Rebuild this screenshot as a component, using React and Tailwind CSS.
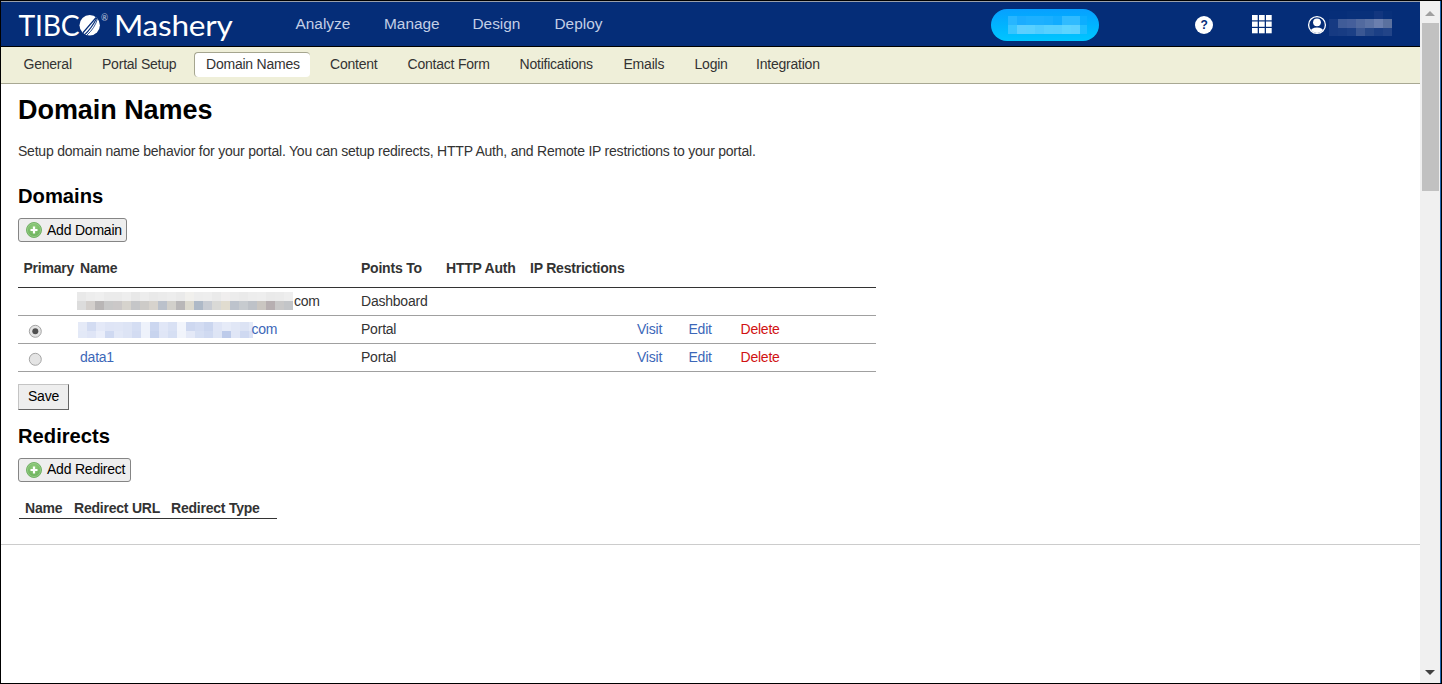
import React from "react";

const mainNav = [
  ["Analyze", "w-[88.5px]"],
  ["Manage", "w-[88.5px]"],
  ["Design", "w-[82px]"],
  ["Deploy", "w-[60px]"],
];

const subNav = [
  ["Portal Setup", "w-[92px]"],
  ["Domain Names", "w-[116px]"],
  ["Content", "w-[77.5px]"],
  ["Contact Form", "w-[112px]"],
  ["Notifications", "w-[104px]"],
  ["Emails", "w-[71px]"],
  ["Login", "w-[61.5px]"],
  ["Integration", "w-[80px]"],
];

function Logo() {
  return (
    <svg className="block shrink-0" width="218" height="40" viewBox="0 0 218 40" fill="#fff" fontFamily="Lato, sans-serif">
      <text x="0.5" y="30.5" fontSize="29" textLength="61" lengthAdjust="spacingAndGlyphs">TIBC</text>
      <clipPath id="globe"><circle cx="71.7" cy="20.2" r="10.2" /></clipPath>
      <circle cx="71.7" cy="20.2" r="10.2" />
      <g clipPath="url(#globe)" fill="none" stroke="#052d78">
        <path d="M63 30 Q70 22 79 11.5" strokeWidth="1.2" />
        <path d="M65.5 31 Q74 23 79 12.5" strokeWidth="1.1" />
        <path d="M69 30 Q77 23 79.5 13.5" strokeWidth=".8" />
        <path d="M59 23 Q62 28 67 31 L60 34Z" fill="#052d78" stroke="none" />
      </g>
      <text x="83" y="16" fontSize="8.5" fillOpacity=".75">®</text>
      <text x="96" y="30.5" fontSize="28" textLength="118.5" lengthAdjust="spacingAndGlyphs">Mashery</text>
    </svg>
  );
}

function Mosaic({ width, height, cell, rows, className }) {
  return (
    <svg className={className} width={width} height={height} shapeRendering="crispEdges">
      {rows.map((r, j) =>
        r.colors.map((c, i) => (
          <rect key={j + "-" + i} x={i * cell} y={r.y} width={cell} height={r.h} fill={c} />
        ))
      )}
    </svg>
  );
}

const grayRows = [
  { y: 0, h: 9, colors: "#e9e9e9 #ededed #efefef #ebebeb #ebebeb #eeeeee #e8e8e8 #ededed #e9e9e9 #ebebeb #ededed #eaeaea #f1f0ed #ededed #eeeeee #eaeaea #f0eeee #ececec #eaeaea #ededed #eeeeee #eaeaea #ebebeb #eeeeee".split(" ") },
  { y: 9, h: 9, colors: "#dcdcdc #d3cfcc #b9b6b6 #c8c8c8 #cbc8c8 #d6d3cd #c5c6c8 #cdcbc8 #d7d3cd #bbc1cb #d2d0cb #b9b7b8 #dcd9ce #aeb9c7 #c8ccd3 #d9d9d6 #e1dccf #bdc3cc #c7cbcf #bec2c8 #cac6c1 #b7afb1 #c9c8c8 #c3c5c8".split(" ") },
];
const blueRows = [
  { y: 0, h: 9, colors: "#e5eaf7 #d3dcf2 #e4e9f8 #dfe5f6 #e0e6f6 #dde4f5 #d5def3 #eef2fb #ccd7f0 #e1e7f7 #d9e1f4 #f2f5fc #ced8f0 #d3dcf2 #cbd6ef #dfe5f6 #e6ebf8 #e1e7f6 #dce3f4 #e4eaf8".split(" ") },
  { y: 9, h: 7, colors: "#e3e9f7 #dfe5f6 #eaeefa #cfd9f1 #e2e8f7 #dde4f5 #d3dcf2 #eef2fb #c8d4ee #e0e6f6 #d6dff3 #f1f4fb #e4e9f7 #d6dff3 #d0daf1 #dee5f5 #bdcbea #e0e6f6 #cfd9f1 #dbe2f5".split(" ") },
];
const pillRows = [
  { y: 0, h: 9, colors: "#28b6ff #1badff #1db0ff #1db0ff #1aafff #12acff #30bbff #30bbff #0caeff".split(" ") },
  { y: 9, h: 9, colors: "#38c5ff #5ccfff #59d0ff #50ccff #56d0ff #56cfff #5cd4ff #5cd1ff #1fbeff".split(" ") },
];
const userRows = [
  { y: 0, h: 8, colors: "#062e79 #062e79 #08307a #08307a #08307a #12367f #08307a".split(" ") },
  { y: 8, h: 9, colors: "#163a82 #405c98 #455f9b #526a9f #5c73a5 #6b7fae #5b719f".split(" ") },
  { y: 17, h: 8, colors: "#163a82 #183c83 #1c4086 #3a5793 #264889 #1b3f85 #224488".split(" ") },
];

function PlusIcon() {
  return (
    <svg className="shrink-0" width="16" height="16" viewBox="0 0 16 16">
      <defs>
        <radialGradient id="green" cx=".5" cy=".35" r=".7">
          <stop offset="0" stopColor="#94cf80" />
          <stop offset="1" stopColor="#62ab53" />
        </radialGradient>
      </defs>
      <circle cx="8" cy="8" r="7.5" fill="url(#green)" stroke="#74b268" />
      <circle cx="8" cy="8" r="6.5" fill="none" stroke="#9ed18f" strokeWidth=".8" />
      <path d="M8 4.5v7M4.5 8h7" stroke="#fff" strokeWidth="2.2" />
    </svg>
  );
}

function AddButton({ children, className, labelClass }) {
  return (
    <button className={"flex h-6 items-center gap-[5px] whitespace-nowrap rounded-[3px] border border-[#858585] bg-[#eee] pl-[7px] text-black " + className}>
      <PlusIcon />
      <span className={labelClass}>{children}</span>
    </button>
  );
}

function Radio({ checked }) {
  return (
    <svg className="ml-[10px] mt-[5px]" width="14" height="14" viewBox="0 0 14 14">
      <circle cx="7.3" cy="7.3" r="6" fill="#e4e4e4" stroke="#a5a5a5" />
      {checked && <circle cx="7.3" cy="7.3" r="3" fill="#505050" />}
    </svg>
  );
}

const columns = "grid grid-cols-[62px_281px_85px_84px_107px_51.5px_52px_1fr] items-center";

function DomainRow({ radio, name, target, links }) {
  return (
    <div className={columns + " h-7 border-b border-[#a0a0a0] pb-[2px]"}>
      <div>{radio}</div>
      <div className="flex items-center">{name}</div>
      <div>{target}</div>
      <div />
      <div />
      {links && (
        <>
          <a className="text-[#3c67b8]">Visit</a>
          <a className="text-[#3c67b8]">Edit</a>
          <a className="text-[#d11212]">Delete</a>
        </>
      )}
    </div>
  );
}

function Header() {
  return (
    <header className="flex h-[45px] shrink-0 items-center border-b border-black bg-[#052d78]">
      <div className="w-[276.5px] shrink-0 pl-[17px] pt-[2px]"><Logo /></div>
      <nav className="ml-[18px] flex w-[695.5px] text-[15.4px] tracking-normal text-[#c3cfe6]">
        {mainNav.map(([label, w]) => (
          <a key={label} className={w + " shrink-0"}>{label}</a>
        ))}
      </nav>
      <div className="mt-[2px] flex h-8 w-[108px] shrink-0 items-center rounded-full bg-linear-to-b from-[#08a0ff] to-[#00c6ff] pl-[17px]">
        <Mosaic width={79} height={18} cell={9} rows={pillRows} className="mt-[-1px]" />
      </div>
      <svg className="ml-[96px] mt-[2px] shrink-0" width="18" height="18" viewBox="0 0 18 18">
        <circle cx="9" cy="9" r="9" fill="#fff" />
        <text x="9" y="13" textAnchor="middle" fontFamily="Liberation Sans, sans-serif" fontWeight="700" fontSize="12" fill="#052d78">?</text>
      </svg>
      <svg className="ml-[39px] mt-px shrink-0" width="20" height="19" viewBox="0 0 20 19" fill="#fff">
        {[0, 6.5, 13].map((y) => [0, 7, 14].map((x) => (
          <rect key={x + "-" + y} x={x} y={y} width="5.7" height="5.3" />
        )))}
      </svg>
      <svg className="ml-[35px] mt-[2px] shrink-0" width="20" height="20" viewBox="0 0 20 20">
        <clipPath id="avatar"><circle cx="10" cy="10" r="7.9" /></clipPath>
        <circle cx="10" cy="10" r="8.4" fill="none" stroke="#fff" strokeWidth="1.3" />
        <g clipPath="url(#avatar)" fill="#fff">
          <circle cx="10" cy="7.3" r="3.9" />
          <ellipse cx="10" cy="17" rx="6.8" ry="4.5" />
        </g>
      </svg>
      <Mosaic width={63} height={25} cell={9} rows={userRows} className="ml-[2px] mt-[-2px] shrink-0" />
    </header>
  );
}

function SubNav() {
  return (
    <nav className="flex h-[37px] shrink-0 border-b border-[#a8a893] bg-[#efefd9] pl-[22.5px] pt-[5px] leading-[25px] text-[#333]">
      <a className="w-[78.5px] shrink-0">General</a>
      {subNav.map(([label, w]) =>
        label === "Domain Names" ? (
          <a key={label} className="mr-5 h-[25px] w-[116px] shrink-0 rounded-[4px] border-l border-t border-[#a5a58f] bg-white pl-[11px] leading-[23px]">{label}</a>
        ) : (
          <a key={label} className={w + " shrink-0"}>{label}</a>
        )
      )}
    </nav>
  );
}

function Scrollbar() {
  return (
    <div className="flex w-[20px] shrink-0 flex-col items-center bg-[#f0f0f0]">
      <svg className="mt-[10px] shrink-0" width="10" height="5"><path d="M0 5L5 0L10 5Z" fill="#a0a0a0" /></svg>
      <div className="mt-[7px] h-[168px] w-[17px] shrink-0 bg-[#c1c1c1]" />
      <svg className="mb-[8px] mt-auto shrink-0" width="10" height="5"><path d="M0 0L5 5L10 0Z" fill="#404040" /></svg>
    </div>
  );
}

export default function App() {
  return (
    <div className="flex h-[684px] w-[1442px] overflow-hidden border border-black bg-white font-['Liberation_Sans',Arial,sans-serif] text-[14px] leading-5 tracking-[-0.22px] text-[#333]">
      <div className="flex min-w-0 flex-1 flex-col border-t border-[#9aa0aa]">
        <Header />
        <SubNav />
        <main className="flex h-[461px] shrink-0 flex-col items-start border-b border-[#ccc] pl-[17px]">
          <h1 className="mt-[10px] text-[27px] font-bold leading-8 tracking-[-0.05px] text-black">Domain Names</h1>
          <p className="mt-[15px]">Setup domain name behavior for your portal. You can setup redirects, HTTP Auth, and Remote IP restrictions to your portal.</p>
          <h2 className="mt-[23px] text-[20.2px] font-bold leading-6 tracking-normal text-black">Domains</h2>
          <AddButton className="mt-[10px] w-[109px]">Add Domain</AddButton>
          <div className="w-[858px]">
            <div className={columns + " h-[46px] border-b border-[#333] pt-[7px] font-bold"}>
              <div className="pl-[5.5px]">Primary</div>
              <div>Name</div>
              <div>Points To</div>
              <div>HTTP Auth</div>
              <div>IP Restrictions</div>
            </div>
            <DomainRow
              name={<><Mosaic width={216} height={18} cell={9} rows={grayRows} className="-ml-[3px] mr-px" />com</>}
              target="Dashboard"
            />
            <DomainRow
              radio={<Radio checked />}
              name={<span className="flex items-center text-[#3c67b8]"><Mosaic width={175} height={16} cell={9} rows={blueRows} className="-ml-[2px] -mr-[1.5px] mt-[2px]" />com</span>}
              target="Portal"
              links
            />
            <DomainRow radio={<Radio />} name={<a className="text-[#3c67b8]">data1</a>} target="Portal" links />
          </div>
          <button className="mt-[12px] h-[26px] w-[51px] border border-b-[#666] border-l-[#c4c4c4] border-r-[#666] border-t-[#c4c4c4] bg-[#eee] pb-[3px] text-black">Save</button>
          <h2 className="mt-[14px] text-[20.2px] font-bold leading-6 tracking-normal text-black">Redirects</h2>
          <AddButton className="mt-[10px] w-[113px]" labelClass="pb-[2px] leading-[18px]">Add Redirect</AddButton>
          <div className="ml-px mt-[16px] grid h-[21px] w-[258px] grid-cols-[49px_97px_1fr] border-b border-[#333] pl-[6px] font-bold">
            <div>Name</div>
            <div>Redirect URL</div>
            <div>Redirect Type</div>
          </div>
        </main>
      </div>
      <Scrollbar />
      <div className="w-px shrink-0 bg-[#1d62ad]" />
    </div>
  );
}
